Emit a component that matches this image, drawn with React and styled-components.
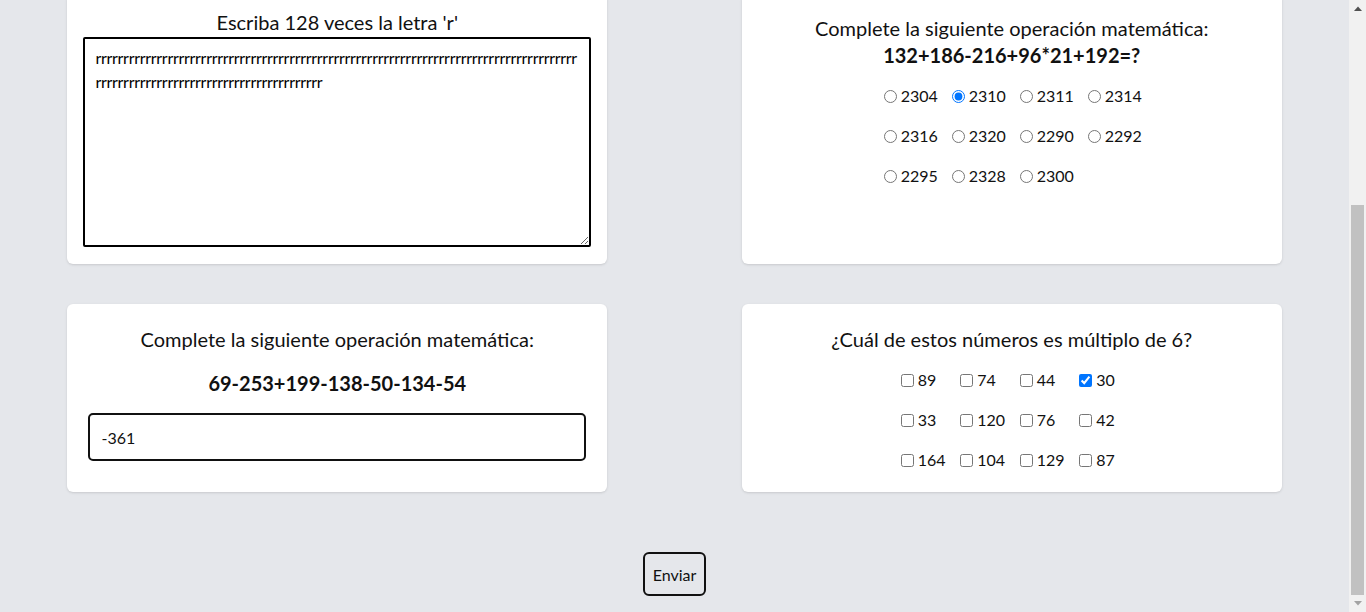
import React, { useLayoutEffect, useState } from 'react';
import styled, { createGlobalStyle } from 'styled-components';

const GlobalStyle = createGlobalStyle`
  html, body {
    margin: 0;
    background: #e5e7eb;
  }
  body {
    font-family: Lato, "Liberation Sans", sans-serif;
    color: #111;
    padding-right: 17px;
  }
  * { box-sizing: border-box; }
`;

// the form is seen scrolled to its end; the part above the fold is not shown
const Page = styled.main`
  padding: 288px 0 16px;
`;

const Questions = styled.div`
  display: flex;
  flex-wrap: wrap;
  justify-content: space-around;
  row-gap: 40px;
`;

const Card = styled.section`
  width: 40%;
  background: #fff;
  border-radius: 6px;
  box-shadow: 0 1px 3px 0 rgba(0, 0, 0, 0.1), 0 1px 2px -1px rgba(0, 0, 0, 0.1);
  padding: ${(p) => p.$pad || '21px'};
  text-align: center;
`;

const Title = styled.h2`
  margin: 0 0 ${(p) => p.$gap || '0'};
  font-size: 20px;
  line-height: 28px;
  font-weight: 400;
`;

const Equation = styled.p`
  margin: ${(p) => p.$margin || '0'};
  font-size: 20px;
  line-height: ${(p) => p.$line || '28px'};
  font-weight: 700;
`;

const LongText = styled.textarea`
  display: block;
  width: 100%;
  height: 210px;
  border: 2px solid #000;
  border-radius: 2px;
  padding: 7px 10px;
  font-family: inherit;
  font-size: 16px;
  line-height: 24px;
  letter-spacing: -0.29px;
  color: #000;
  background: #fff;
  outline: none;
`;

const AnswerInput = styled.input`
  display: block;
  width: 100%;
  height: 48px;
  border: 2px solid #111;
  border-radius: 5px;
  padding: 0 11px;
  font-family: inherit;
  font-size: 16px;
  color: #111;
  background: #fff;
  outline: none;
`;

const Options = styled.div`
  display: grid;
  grid-template-columns: repeat(3, ${(p) => p.$col}) ${(p) => p.$last};
  justify-content: center;
  row-gap: 16px;
  margin-top: ${(p) => p.$top || '15px'};
  text-align: left;
`;

const Option = styled.label`
  display: inline-flex;
  align-items: center;
  font-size: 16px;
  line-height: 24px;
  white-space: nowrap;

  input {
    width: 13px;
    height: 13px;
    margin: 0 4px 0 ${(p) => (p.$kind === 'radio' ? '5px' : '4px')};
  }
`;

const Actions = styled.div`
  display: flex;
  justify-content: center;
  margin-top: 60px;
`;

const SubmitButton = styled.button`
  height: 44px;
  padding: 0 8px;
  border: 2px solid #111;
  border-radius: 6px;
  background: transparent;
  font-family: inherit;
  font-size: 16px;
  color: #111;
  cursor: pointer;
`;

/* classic window scrollbar, drawn since the headless view hides its own */
const ScrollBar = styled.div`
  position: fixed;
  top: 0;
  right: 0;
  width: 17px;
  height: 100vh;
  display: flex;
  flex-direction: column;
  background: #f1f1f1;
`;

const Arrow = styled.div`
  flex: 0 0 17px;
  display: flex;
  align-items: center;
  justify-content: center;
  svg { display: block; }
`;

const Track = styled.div`
  flex: 1;
  position: relative;
`;

const Thumb = styled.div`
  position: absolute;
  left: 2px;
  right: 2px;
  background: #c1c1c1;
`;

const radioValues = [2304, 2310, 2311, 2314, 2316, 2320, 2290, 2292, 2295, 2328, 2300];
const checkValues = [89, 74, 44, 30, 33, 120, 76, 42, 164, 104, 129, 87];

const App = () => {
  const [letters, setLetters] = useState('r'.repeat(128));
  const [sum, setSum] = useState('-361');
  const [picked, setPicked] = useState(2310);
  const [checked, setChecked] = useState([30]);
  const [thumb, setThumb] = useState({ top: 0, height: 0 });

  useLayoutEffect(() => {
    const doc = document.documentElement;
    const update = () => {
      const track = window.innerHeight - 34;
      const full = doc.scrollHeight;
      setThumb({
        top: (window.scrollY / full) * track,
        height: Math.min(track, (window.innerHeight / full) * track),
      });
    };
    window.scrollTo(0, doc.scrollHeight);
    update();
    window.addEventListener('scroll', update);
    window.addEventListener('resize', update);
    return () => {
      window.removeEventListener('scroll', update);
      window.removeEventListener('resize', update);
    };
  }, []);

  const toggle = (n) =>
    setChecked((prev) => (prev.includes(n) ? prev.filter((v) => v !== n) : [...prev, n]));

  return (
    <Page>
      <GlobalStyle />
      <form onSubmit={(e) => e.preventDefault()}>
        <Questions>
          <Card $pad="15px 16px 17px">
            <Title $gap="1px">Escriba 128 veces la letra 'r'</Title>
            <LongText value={letters} onChange={(e) => setLetters(e.target.value)} />
          </Card>

          <Card>
            <Title>Complete la siguiente operación matemática:</Title>
            <Equation $line="27px">132+186-216+96*21+192=?</Equation>
            <Options $col="68px" $last="62px">
              {radioValues.map((v) => (
                <Option key={v} $kind="radio">
                  <input
                    type="radio"
                    name="op1"
                    checked={picked === v}
                    onChange={() => setPicked(v)}
                  />
                  {v}
                </Option>
              ))}
            </Options>
          </Card>

          <Card $pad="21px 21px 31px">
            <Title>Complete la siguiente operación matemática:</Title>
            <Equation $margin="16px 0">69-253+199-138-50-134-54</Equation>
            <AnswerInput value={sum} onChange={(e) => setSum(e.target.value)} />
          </Card>

          <Card $pad="21px 21px 20px">
            <Title>¿Cuál de estos números es múltiplo de 6?</Title>
            <Options $col="59.5px" $last="51.5px">
              {checkValues.map((v) => (
                <Option key={v} $kind="check">
                  <input type="checkbox" checked={checked.includes(v)} onChange={() => toggle(v)} />
                  {v}
                </Option>
              ))}
            </Options>
          </Card>
        </Questions>
        <Actions>
          <SubmitButton type="submit">Enviar</SubmitButton>
        </Actions>
      </form>

      <ScrollBar aria-hidden="true">
        <Arrow>
          <svg width="8" height="5" viewBox="0 0 8 5">
            <polygon points="0,5 4,0.5 8,5" fill="#505050" />
          </svg>
        </Arrow>
        <Track>
          <Thumb style={{ top: thumb.top, height: thumb.height }} />
        </Track>
        <Arrow>
          <svg width="8" height="5" viewBox="0 0 8 5">
            <polygon points="0,0 8,0 4,4.5" fill="#a3a3a3" />
          </svg>
        </Arrow>
      </ScrollBar>
    </Page>
  );
};

export default App;
